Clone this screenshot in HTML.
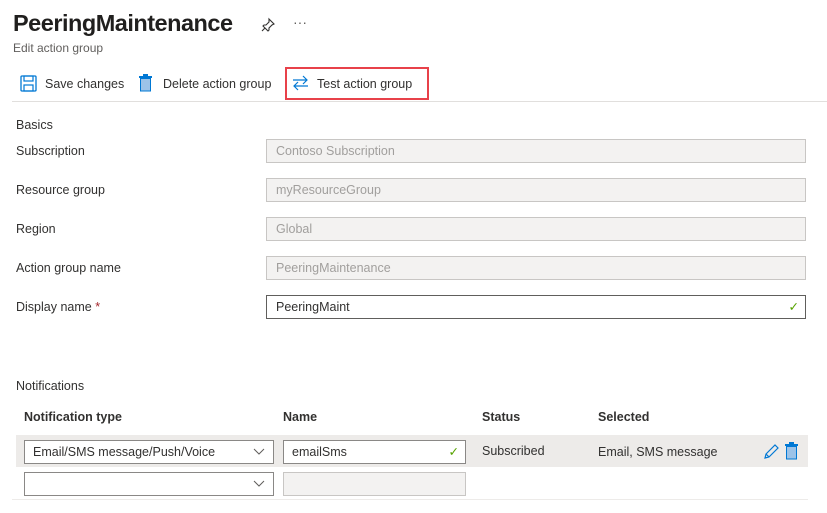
<!DOCTYPE html><html><head><style>
body{margin:0;width:827px;height:513px;background:#fff;font-family:"Liberation Sans",sans-serif;color:#323130;position:relative;overflow:hidden;font-size:13px}
.a{position:absolute;white-space:nowrap}
.in{position:absolute;left:266px;width:529px;height:22px;border:1px solid #c8c6c4;background:#f3f2f1;color:#a19f9d;font-size:12.5px;line-height:22px;padding-left:9px;box-sizing:content-box}
.lab{position:absolute;left:16px;font-size:12.5px}
.chev{position:absolute;right:8px;top:7px}
</style></head><body>
<div class="a" style="left:13px;top:10px;font-size:23.5px;font-weight:bold;color:#201f1e;letter-spacing:-0.5px">PeeringMaintenance</div>
<svg class="a" style="left:260px;top:17px" width="16" height="16" viewBox="0 0 16 16"><path d="M9 2l5 5-2 1-3 3 0 2-1 1-5-5 1-1 2 0 3-3z M5 11l-3 3" fill="none" stroke="#323130" stroke-width="1.1"/></svg>
<div class="a" style="left:293px;top:14px;font-size:14px;color:#605e5c">···</div>
<div class="a" style="left:13px;top:41px;font-size:12px;color:#605e5c">Edit action group</div>
<svg class="a" style="left:20px;top:75px" width="17" height="17" viewBox="0 0 17 17"><rect x="1" y="1" width="15" height="15" rx="1" fill="none" stroke="#0078d4" stroke-width="1.3"/><rect x="4" y="1" width="9" height="5" fill="none" stroke="#0078d4" stroke-width="1.2"/><rect x="4" y="10" width="9" height="6" fill="none" stroke="#0078d4" stroke-width="1.2"/></svg>
<div class="a" style="left:45px;top:77px;font-size:12.5px">Save changes</div>
<svg class="a" style="left:138px;top:74px" width="15" height="18" viewBox="0 0 15 18"><rect x="1" y="2" width="13" height="2" fill="#0078d4"/><rect x="5" y="0" width="5" height="2" fill="#0078d4"/><rect x="2.5" y="4.5" width="10" height="12.5" fill="#9cc3e8" stroke="#0078d4"/></svg>
<div class="a" style="left:163px;top:77px;font-size:12.5px">Delete action group</div>
<div class="a" style="left:285px;top:67px;width:140px;height:29px;border:2px solid #e8414a"></div>
<svg class="a" style="left:292px;top:75px" width="17" height="16" viewBox="0 0 17 16"><path d="M1 5h14M11 1l4 4-4 4M16 11H2M6 7l-4 4 4 4" fill="none" stroke="#0078d4" stroke-width="1.2"/></svg>
<div class="a" style="left:317px;top:77px;font-size:12.5px">Test action group</div>
<div class="a" style="left:12px;top:101px;width:815px;height:1px;background:#e1dfdd"></div>
<div class="lab" style="top:118px">Basics</div>
<div class="lab" style="top:144px">Subscription</div><div class="in" style="top:139px">Contoso Subscription</div>
<div class="lab" style="top:183px">Resource group</div><div class="in" style="top:178px">myResourceGroup</div>
<div class="lab" style="top:222px">Region</div><div class="in" style="top:217px">Global</div>
<div class="lab" style="top:261px">Action group name</div><div class="in" style="top:256px">PeeringMaintenance</div>
<div class="lab" style="top:300px">Display name <span style="color:#a4262c">*</span></div><div class="in" style="top:295px;background:#fff;color:#323130;border-color:#605e5c">PeeringMaint<span style="position:absolute;right:6px;color:#57a300">✓</span></div>
<div class="lab" style="top:379px">Notifications</div>
<div class="a" style="left:24px;top:410px;font-weight:bold;font-size:12.5px">Notification type</div>
<div class="a" style="left:283px;top:410px;font-weight:bold;font-size:12.5px">Name</div>
<div class="a" style="left:482px;top:410px;font-weight:bold;font-size:12.5px">Status</div>
<div class="a" style="left:598px;top:410px;font-weight:bold;font-size:12.5px">Selected</div>
<div class="a" style="left:16px;top:435px;width:792px;height:32px;background:#edebe9"></div>
<div class="a" style="left:24px;top:440px;width:240px;height:22px;border:1px solid #8a8886;background:#fff;padding-left:8px;line-height:22px;font-size:12.5px">Email/SMS message/Push/Voice<svg class="chev" width="12" height="8" viewBox="0 0 12 8"><path d="M1 1l5 5 5-5" fill="none" stroke="#605e5c"/></svg></div>
<div class="a" style="left:283px;top:440px;width:173px;height:22px;border:1px solid #8a8886;background:#fff;padding-left:8px;line-height:22px;font-size:12.5px">emailSms<span style="position:absolute;right:6px;color:#57a300">✓</span></div>
<div class="a" style="left:482px;top:444px;font-size:12.5px">Subscribed</div>
<div class="a" style="left:598px;top:445px;font-size:12.5px">Email, SMS message</div>
<svg class="a" style="left:763px;top:443px" width="16" height="17" viewBox="0 0 16 17"><path d="M2 15l1-4 9-9 3 3-9 9z M3 11l3 3" fill="none" stroke="#0078d4" stroke-width="1.2"/></svg>
<svg class="a" style="left:784px;top:442px" width="15" height="18" viewBox="0 0 15 18"><rect x="1" y="2" width="13" height="2" fill="#0078d4"/><rect x="5" y="0" width="5" height="2" fill="#0078d4"/><rect x="2.5" y="4.5" width="10" height="12.5" fill="#9cc3e8" stroke="#0078d4"/></svg>
<div class="a" style="left:24px;top:472px;width:248px;height:22px;border:1px solid #8a8886;background:#fff"><svg class="chev" width="12" height="8" viewBox="0 0 12 8"><path d="M1 1l5 5 5-5" fill="none" stroke="#605e5c"/></svg></div>
<div class="a" style="left:283px;top:472px;width:181px;height:22px;border:1px solid #c8c6c4;background:#f3f2f1"></div>
<div class="a" style="left:12px;top:499px;width:796px;height:1px;background:#edebe9"></div>
</body></html>
